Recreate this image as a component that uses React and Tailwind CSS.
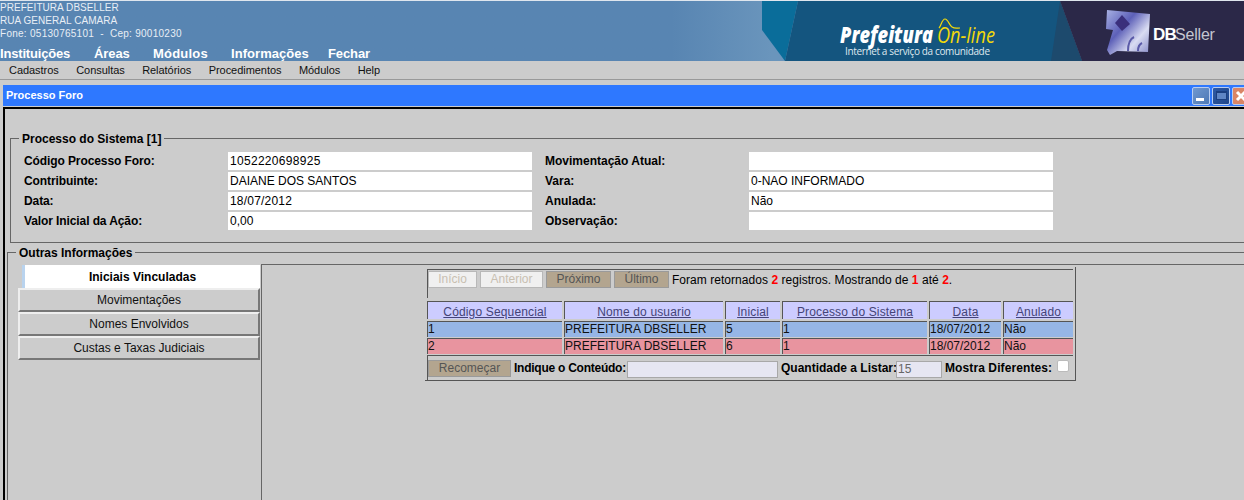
import React from 'react';

const topMenu = [
  ['Instituições', 'w-[94px] tracking-[-0.18px]'],
  ['Áreas', 'w-[59px] tracking-[-0.1px]'],
  ['Módulos', 'w-[78px] tracking-[0.2px]'],
  ['Informações', 'w-[97px] tracking-[0.05px]'],
  ['Fechar', 'w-[50px] tracking-[-0.1px]'],
];
const subMenu = ['Cadastros', 'Consultas', 'Relatórios', 'Procedimentos', 'Módulos', 'Help'];
const leftFields = [
  ['Código Processo Foro:', '1052220698925', 'tracking-[0.3px]'],
  ['Contribuinte:', 'DAIANE DOS SANTOS', ''],
  ['Data:', '18/07/2012', 'tracking-[0.2px]'],
  ['Valor Inicial da Ação:', '0,00', ''],
];
const rightFields = [
  ['Movimentação Atual:', '', ''],
  ['Vara:', '0-NAO INFORMADO', ''],
  ['Anulada:', 'Não', ''],
  ['Observação:', '', ''],
];
const tabs = ['Movimentações', 'Nomes Envolvidos', 'Custas e Taxas Judiciais'];
const columns = ['Código Sequencial', 'Nome do usuario', 'Inicial', 'Processo do Sistema', 'Data', 'Anulado'];
const rows = [
  { bg: 'bg-[#96b6e6]', cells: ['1', 'PREFEITURA DBSELLER', '5', '1', '18/07/2012', 'Não'] },
  { bg: 'bg-[#e8949f]', cells: ['2', 'PREFEITURA DBSELLER', '6', '1', '18/07/2012', 'Não'] },
];

const Logo = () => (
  <svg width="482" height="60" viewBox="0 0 482 60" className="block shrink-0">
    <defs>
      <linearGradient id="cube" x1="0" y1="0" x2="1" y2="0.9">
        <stop offset="0" stopColor="#a9b2e4" />
        <stop offset="0.4" stopColor="#5d60b8" />
        <stop offset="0.72" stopColor="#d9dcf2" />
        <stop offset="1" stopColor="#8f93cc" />
      </linearGradient>
    </defs>
    <polygon points="0,0 36,0 23,60 0,29" fill="#0a6d9a" />
    <polygon points="36,0 298,0 320,60 23,60" fill="#14557f" />
    <polygon points="298,0 320,60 289,60" fill="#1d4a6d" />
    <polygon points="298,0 482,0 482,60 320,60" fill="#2b2848" />
    <text x="78" y="42" fontFamily="'Open Sans', sans-serif" fontSize="22" fontWeight="800" fontStyle="italic" fill="#fff" textLength="93" lengthAdjust="spacingAndGlyphs">Prefeitura</text>
    <text x="175" y="42" fontFamily="'Open Sans', sans-serif" fontSize="22" fontWeight="400" fontStyle="italic" fill="#f2d90a" textLength="58" lengthAdjust="spacingAndGlyphs">On-line</text>
    <path d="M177 27c2-2 3-9 6-9s4 6 7 8 5 1 8 1" fill="none" stroke="#f2d90a" strokeWidth="1.2" />
    <text x="83" y="54" fontFamily="'Open Sans', sans-serif" fontSize="10" fill="#dfe8ee" textLength="145">Internet a serviço da comunidade</text>
    <path d="M345 9l43 4-2 38-31-1-7 4-3-5 6-20-7-1z" fill="url(#cube)" />
    <path d="M360 14l8 9-8 7-7-8z" fill="#3a2f7c" />
    <path d="M366 50c0-8 2-12 6-14M376 50c0-4 2-7 4-8" fill="none" stroke="#5a5aa8" strokeWidth="2" />
    <text x="391" y="39" fontFamily="'Liberation Sans', sans-serif" fontSize="17" fontWeight="700" fill="#fff" letterSpacing="-0.8">DB</text>
    <text x="413" y="39" fontFamily="'Liberation Sans', sans-serif" fontSize="16" fill="#c4c5d0" letterSpacing="-0.2">Seller</text>
  </svg>
);

const WindowButton = ({ bg, children }) => (
  <div className={`w-[18px] h-[18px] shrink-0 rounded-[2px] border border-[#b9cdf0] flex items-center justify-center ${bg}`}>
    {children}
  </div>
);

const FieldColumn = ({ fields, labelClass }) => (
  <div className="flex flex-col gap-[2px] w-[508px]">
    {fields.map(([label, value, extra]) => (
      <div key={label} className="flex h-[18px] items-center">
        <div className={`w-[204px] font-bold ${labelClass}`}>{label}</div>
        <div className={`w-[304px] h-full bg-white pl-[2px] leading-[18px] ${extra}`}>{value}</div>
      </div>
    ))}
  </div>
);

const PagerButton = ({ active, width, children }) => (
  <div
    className={`h-[17px] text-center leading-[15px] border ${width} ${
      active ? 'bg-[#b3a58f] border-[#9a9a9a] text-[#555]' : 'bg-[#f0f0f0] border-[#b8b8b8] text-[#c8bfb0]'
    }`}
  >
    {children}
  </div>
);

const Red = ({ children }) => <b className="text-[#ff0000]">{children}</b>;

export default function App() {
  return (
    <div className="w-[1244px] h-[500px] overflow-hidden bg-[#cccccc] text-[12px] text-black font-['Liberation_Sans',Arial,sans-serif]">
      {/* topo */}
      <div className="h-[61px] bg-gradient-to-r from-[#5885b2] via-[#5885b2] via-54% to-[#6a95bc] to-62% border-t border-[#dfe6ee] flex justify-between overflow-hidden">
        <div className="text-white">
          <div className="text-[10px] leading-[13px] text-[#e8eef5] whitespace-pre">
            <div className="tracking-[0.05px]">PREFEITURA DBSELLER</div>
            <div className="tracking-[0.05px]">RUA GENERAL CAMARA</div>
            <div className="tracking-[0.27px]">Fone: 05130765101  -  Cep: 90010230</div>
          </div>
          <div className="flex mt-[6px] text-[13px] font-bold leading-[15px]">
            {topMenu.map(([m, w]) => (
              <span key={m} className={w}>{m}</span>
            ))}
          </div>
        </div>
        <Logo />
      </div>

      <div className="h-[19px] flex items-center gap-[17.5px] pl-[9px] text-[11px] tracking-[-0.05px] text-[#111] border-b border-[#999]">
        {subMenu.map((m) => (
          <span key={m}>{m}</span>
        ))}
      </div>

      {/* janela */}
      <div className="pl-[3px] pt-[5px]">
        <div className="h-[21px] bg-[#2e78ff] flex items-center overflow-hidden">
          <span className="w-[1189px] shrink-0 pl-[3px] text-[11px] font-bold text-white">Processo Foro</span>
          <div className="flex gap-[2px] shrink-0">
            <WindowButton bg="bg-gradient-to-br from-[#7098d0] to-[#4d78b5]">
              <div className="w-[8px] h-[3px] bg-white mt-[8px] mr-[2px]" />
            </WindowButton>
            <WindowButton bg="bg-gradient-to-br from-[#2f5ba6] to-[#1e4488]">
              <div className="w-[11px] h-[9px] bg-[#5f85c4] border-t-[2px] border-x border-b border-[#1c3f80]" />
            </WindowButton>
            <WindowButton bg="bg-[#d98566]">
              <svg width="12" height="12" viewBox="0 0 12 12">
                <path d="M2 2l8 8M10 2l-8 8" stroke="#fff" strokeWidth="3" />
              </svg>
            </WindowButton>
          </div>
        </div>

        <div className="mt-[1px] border-t-[2px] border-l-[2px] border-black h-[400px] pt-[21px]">
          <fieldset className="ml-[5px] w-[1300px] h-[113px] border border-[#666] pl-[13px] pt-[6px]">
            <legend className="-ml-[5px] px-[3px] pt-[2px] font-bold leading-[14px]">Processo do Sistema [1]</legend>
            <div className="flex gap-[13px]">
              <FieldColumn fields={leftFields} labelClass="tracking-[-0.1px]" />
              <FieldColumn fields={rightFields} labelClass="" />
            </div>
          </fieldset>

          <fieldset className="mt-[1px] ml-[2px] w-[1300px] h-[300px] border border-[#666] pl-[10px] pt-[4px]">
            <legend className="-ml-[2px] px-[3px] pt-[2px] font-bold leading-[14px]">Outras Informações</legend>
            <div className="flex">
              {/* abas */}
              <div className="w-[242px] mr-[1px] shrink-0 pt-[1px]">
                <div className="ml-[4px] h-[23px] bg-white border-l-[3px] border-[#b9d3ee] text-center font-bold leading-[25px]">
                  Iniciais Vinculadas
                </div>
                {tabs.map((t) => (
                  <div
                    key={t}
                    className="h-[24px] border-2 border-t-[#eeeeee] border-l-[#eeeeee] border-r-[#777] border-b-[#777] text-center text-[#111] leading-[20px]"
                  >
                    {t}
                  </div>
                ))}
              </div>

              {/* lista */}
              <div className="flex-1 border-l border-t border-[#666] pl-[163px] pt-[2px] h-[300px]">
                <div className="w-[651px] h-[114px] border-r border-b border-[#555] pl-[2px] pt-[2px]">
                  <div className="w-[646px] border-t border-l border-[#555] h-[29px] mb-[3px] flex items-start pt-[1px]">
                    <PagerButton width="w-[49px] mr-[3px]">Início</PagerButton>
                    <PagerButton width="w-[63px] mr-[3px]">Anterior</PagerButton>
                    <PagerButton active width="w-[65px] mr-[3px]">Próximo</PagerButton>
                    <PagerButton active width="w-[55px] mr-[3px]">Último</PagerButton>
                    <div className="leading-[18px] tracking-[0.04px]">
                      Foram retornados <Red>2</Red> registros. Mostrando de <Red>1</Red> até <Red>2</Red>.
                    </div>
                  </div>
                  <div className="grid grid-cols-[135px_159px_55px_145px_72px_70px] gap-x-[2px]">
                    {columns.map((c) => (
                      <div key={c} className="h-[18px] bg-[#ccccff] border-t border-l border-[#555] text-center text-[#444477] underline leading-[20px] tracking-[0.15px]">
                        {c}
                      </div>
                    ))}
                  </div>
                  <div className="mt-[2px] flex flex-col gap-[1px]">
                    {rows.map((r) => (
                      <div key={r.cells[0]} className="grid grid-cols-[135px_159px_55px_145px_72px_70px] gap-x-[2px]">
                        {r.cells.map((v, i) => (
                          <div key={i} className={`h-[16px] ${r.bg} border-t border-l border-[#555] leading-[15px] text-[#111]`}>
                            {v}
                          </div>
                        ))}
                      </div>
                    ))}
                  </div>
                  <div className="w-[646px] mt-[1px] border-t border-l border-[#555] h-[25px] flex items-center">
                    <div className="w-[83px] mr-[3px] mt-[1px] h-[17px] bg-[#b3a58f] border border-[#9a9a9a] text-[#555] text-center leading-[15px]">
                      Recomeçar
                    </div>
                    <b className="w-[113px] shrink-0 tracking-[-0.25px] whitespace-nowrap">Indique o Conteúdo:</b>
                    <div className="w-[151px] h-[17px] mt-[3px] shrink-0 bg-[#e6e6f2] border border-[#a8a8a8] mr-[3px]" />
                    <b className="w-[115px] shrink-0 whitespace-nowrap">Quantidade a Listar:</b>
                    <div className="w-[46px] h-[17px] mt-[3px] shrink-0 bg-[#e6e6f2] border border-[#a8a8a8] mr-[3px] text-[#666] leading-[15px] pl-[1px]">15</div>
                    <b className="w-[112px] shrink-0 tracking-[0.1px] whitespace-nowrap">Mostra Diferentes:</b>
                    <div className="w-[12px] h-[12px] shrink-0 mb-[5px] bg-white rounded-[2px] border border-[#bbb]" />
                  </div>
                </div>
              </div>
            </div>
          </fieldset>
        </div>
      </div>
    </div>
  );
}
